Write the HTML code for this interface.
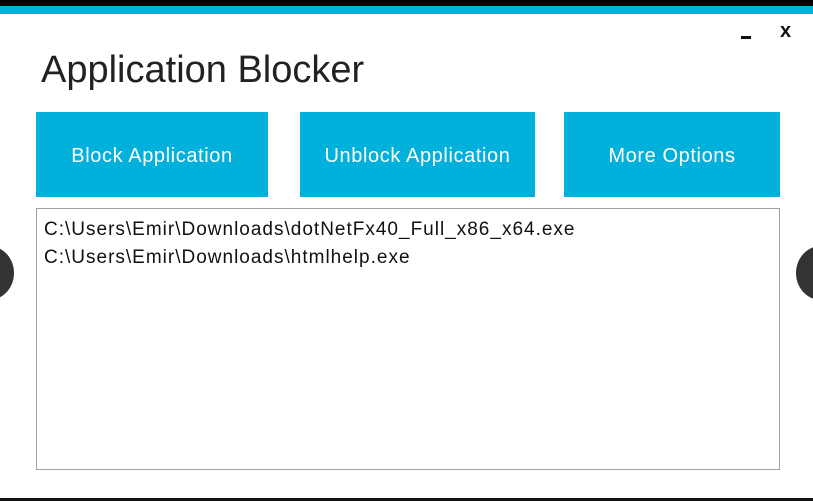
<!DOCTYPE html>
<html><head><style>
body{margin:0;width:813px;height:501px;background:#fff;position:relative;overflow:hidden;font-family:"Liberation Sans",sans-serif;}
.a{position:absolute}
.btn{position:absolute;top:112px;height:85px;background:#02b0dc;color:#fff;font-size:20px;letter-spacing:0.6px;display:flex;align-items:center;justify-content:center;padding-top:4px;box-sizing:border-box}
</style></head><body>
<div class="a" style="left:0;top:0;width:813px;height:6px;background:#000"></div>
<div class="a" style="left:0;top:6px;width:813px;height:8px;background:#02addb"></div>
<div class="a" style="left:0;top:498px;width:813px;height:3px;background:#111"></div>
<div class="a" style="left:741px;top:36px;width:10px;height:3px;background:#111"></div>
<div class="a" style="left:780px;top:18px;font-size:20px;font-weight:bold;color:#111;line-height:26px">x</div>
<div class="a" style="left:41px;top:48px;font-size:38px;color:#222;line-height:44px">Application Blocker</div>
<div class="btn" style="left:36px;width:232px">Block Application</div>
<div class="btn" style="left:300px;width:235px">Unblock Application</div>
<div class="btn" style="left:564px;width:216px">More Options</div>
<div class="a" style="left:36px;top:208px;width:742px;height:260px;border:1px solid #a0a3a8;background:#fff"></div>
<div class="a" style="left:44px;top:216px;font-size:19px;letter-spacing:1px;color:#111;line-height:28px">C:\Users\Emir\Downloads\dotNetFx40_Full_x86_x64.exe<br>C:\Users\Emir\Downloads\htmlhelp.exe</div>
<div class="a" style="left:-36px;top:246px;width:50px;height:54px;border-radius:50%;background:#333"></div>
<div class="a" style="left:796px;top:246px;width:50px;height:54px;border-radius:50%;background:#333"></div>
</body></html>
